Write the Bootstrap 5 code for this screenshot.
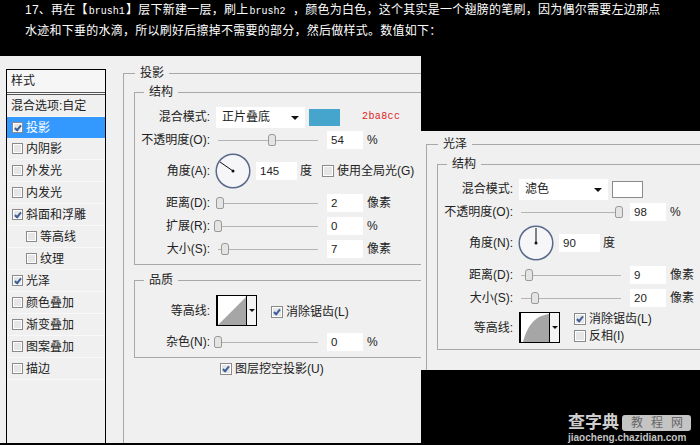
<!DOCTYPE html>
<html lang="zh-CN">
<head>
    <meta charset="UTF-8">
    <title>图层样式</title>
    <link href="https://cdn.jsdelivr.net/npm/bootstrap@5.3.0/dist/css/bootstrap.min.css" rel="stylesheet">
    <style>
        html, body { margin: 0; height: 445px; overflow: hidden; background: #000; }
        body { font-family: "Liberation Sans", "Noto Sans CJK SC", sans-serif; font-size: 12px; color: #222; line-height: 1; position: relative; width: 700px; }
        .intro { color: #fff; padding-left: 25px; font-size: 12px; letter-spacing: .25px; }
        .intro p { margin: 0; height: 21px; line-height: 20px; white-space: nowrap; }
        .intro tt { font-family: "Liberation Mono", monospace; font-size: 10px; letter-spacing: 0; padding: 0 1px; }
        .intro tt.wide { padding-right: 4px; }
        .win { position: absolute; background: #f0f0f0; overflow: hidden; }
        .win-shadow { left: 0; top: 56px; width: 421px; height: 387px; }
        .win-gloss { left: 421px; top: 131px; width: 279px; height: 239px; padding: 13px 0 0 5px; }
        .side { width: 100px; height: 374px; margin: 13px 0 0 6px; border: 1px solid #000; border-bottom: 0; flex: none; }
        .side-head { height: 25px; line-height: 23px; padding-left: 4px; background: #f6f6f6; border-bottom: 3px double #555; font-size: 12px; }
        .side-row { height: 22px; display: flex; align-items: center; padding-left: 5px; gap: 3px; border-bottom: 1px solid #f8f8f8; white-space: nowrap; font-size: 12px; }
        .side-row.first { padding-left: 4px; }
        .side-row.on { background: #3399ff; color: #fff; height: 21px; border-bottom: 0; }
        .side-row.sub { padding-left: 19px; }
        .tick { width: 12px; height: 12px; flex: none; border: 1px solid #8a8a8a; background: #e6e6e6; box-shadow: inset 0 0 0 1px #fff; position: relative; display: inline-block; }
        .side .tick { width: 11px; height: 11px; }
        .tick.yes::after { content: ""; position: absolute; left: 3px; top: 1px; width: 4px; height: 7px; border: solid #3d5f99; border-width: 0 2px 2px 0; transform: rotate(40deg); }
        .pane { flex: 1; padding: 17px 0 0 17px; }
        .frame { border: 1px solid #a8a8a8; border-right: 0; position: relative; }
        .frame-title { position: absolute; left: 11px; top: -7px; background: #f0f0f0; padding: 0 5px; font-size: 12px; }
        .frame .frame .frame-title { left: 9px; }
        .outer-a { height: 400px; padding: 18px 0 0 10px; border-bottom: 0; }
        .inner-a { height: 173px; padding-top: 14px; }
        .inner-b { height: 78px; margin-top: 15px; padding-top: 14px; }
        .line { display: flex; align-items: center; height: 20px; white-space: nowrap; }
        .line + .line { margin-top: 3px; }
        .lab { width: 75px; text-align: right; flex: none; font-size: 12px; }
        .field { width: 36px; height: 18px; line-height: 18px; background: #fff; padding-left: 4px; flex: none; font-size: 11.5px; }
        .field-angle { width: 41px; margin-left: 5px; }
        .unit { margin-left: 4px; font-size: 12px; }
        .unit-angle { margin-left: 3px; }
        .track { width: 100px; height: 1px; background: #b4b4b4; margin: 0 9px 0 8px; position: relative; flex: none; }
        .knob { position: absolute; top: -6px; width: 8px; height: 12px; background: #e4e4e4; border: 1px solid #999; border-radius: 3px 3px 2px 2px; }
        .combo { width: 89px; height: 21px; line-height: 21px; background: #fff; padding-left: 6px; margin-left: 6px; position: relative; flex: none; font-size: 12px; }
        .combo::after { content: ""; position: absolute; right: 6px; top: 9px; border: solid transparent; border-width: 4px 4px 0; border-top-color: #111; }
        .swatch { width: 31px; height: 17px; margin-left: 4px; flex: none; }
        .swatch-blue { background: #45a5cc; }
        .swatch-white { background: #fff; border: 1px solid #8a8a8a; }
        .dial { flex: none; margin-left: 5px; }
        .line-dial { height: 36px; }
        .line-curve { height: 31px; }
        .line + .line-noise { margin-top: 6px; }
        .curve { width: 41px; height: 31px; border: 1px solid #000; border-left-width: 2px; background: #fff; margin-left: 6px; display: flex; flex: none; }
        .curve svg { flex: none; }
        .curve-btn { flex: 1; display: flex; align-items: center; justify-content: center; background: #f4f4f4; border-left: 1px solid #000; }
        .curve-btn::after { content: ""; border: solid transparent; border-width: 3px 3px 0; border-top-color: #111; }
        .red-code { color: #d22; font-family: "Liberation Mono", monospace; font-size: 10px; margin-left: 22px; letter-spacing: .4px; }
        .check { display: flex; align-items: center; gap: 3px; }
        .check-global { margin-left: 10px; }
        .check-knockout { margin: 5px 0 0 86px; }
        .stack { margin-left: 14px; display: flex; flex-direction: column; gap: 5px; }
        .stack-one { padding-top: 3px; }
        .frame-gloss { height: 240px; padding: 19px 0 0 10px; border-bottom: 0; }
        .inner-c { height: 186px; padding-top: 14px; }
        .stamp { position: absolute; left: 568px; top: 414px; width: 122px; }
        .stamp-top { display: flex; align-items: center; gap: 3px; font-weight: 700; font-size: 17px; color: #cfcfcf; white-space: nowrap; }
        .stamp-pill { flex: 1; background: #c4c4c4; color: #666; border-radius: 3px; font-size: 12px; font-weight: 400; letter-spacing: 8px; padding: 2px 0 2px 9px; }
        .stamp-url { font-size: 10px; font-weight: 700; color: #c4c4c4; margin-top: 2px; white-space: nowrap; }
    </style>
</head>
<body>
    <div class="intro">
        <p>17、再在【<tt>brush1</tt>】层下新建一层，刷上<tt class="wide">brush2</tt> ，颜色为白色，这个其实是一个翅膀的笔刷，因为偶尔需要左边那点</p>
        <p>水迹和下垂的水滴，所以刷好后擦掉不需要的部分，然后做样式。数值如下：</p>
    </div>

    <div class="win win-shadow d-flex">
        <div class="side">
            <div class="side-head">样式</div>
            <div class="side-row first">混合选项:自定</div>
            <div class="side-row on"><span class="tick yes"></span>投影</div>
            <div class="side-row"><span class="tick"></span>内阴影</div>
            <div class="side-row"><span class="tick"></span>外发光</div>
            <div class="side-row"><span class="tick"></span>内发光</div>
            <div class="side-row"><span class="tick yes"></span>斜面和浮雕</div>
            <div class="side-row sub"><span class="tick"></span>等高线</div>
            <div class="side-row sub"><span class="tick"></span>纹理</div>
            <div class="side-row"><span class="tick yes"></span>光泽</div>
            <div class="side-row"><span class="tick"></span>颜色叠加</div>
            <div class="side-row"><span class="tick"></span>渐变叠加</div>
            <div class="side-row"><span class="tick"></span>图案叠加</div>
            <div class="side-row"><span class="tick"></span>描边</div>
        </div>
        <div class="pane">
            <div class="frame outer-a">
                <span class="frame-title">投影</span>
                <div class="frame inner-a">
                    <span class="frame-title">结构</span>
                    <div class="line"><span class="lab">混合模式:</span><span class="combo">正片叠底</span><span class="swatch swatch-blue"></span><span class="red-code">2ba8cc</span></div>
                    <div class="line"><span class="lab">不透明度(O):</span><span class="track"><span class="knob" style="left:50px"></span></span><span class="field">54</span><span class="unit">%</span></div>
                    <div class="line line-dial"><span class="lab">角度(A):</span>
                        <svg class="dial" width="36" height="36" viewBox="0 0 36 36"><circle cx="18" cy="18" r="16.8" fill="#f6f6f8" stroke="#5a6a8a" stroke-width="1.5"/><path d="M18 18L5 9" stroke="#111" stroke-width="1"/><circle cx="18" cy="18" r="1.5" fill="#111"/></svg>
                        <span class="field field-angle">145</span><span class="unit unit-angle">度</span><span class="check check-global"><span class="tick"></span>使用全局光(G)</span></div>
                    <div class="line mt-1"><span class="lab">距离(D):</span><span class="track"><span class="knob" style="left:-2px"></span></span><span class="field">2</span><span class="unit">像素</span></div>
                    <div class="line"><span class="lab">扩展(R):</span><span class="track"><span class="knob" style="left:-4px"></span></span><span class="field">0</span><span class="unit">%</span></div>
                    <div class="line"><span class="lab">大小(S):</span><span class="track"><span class="knob" style="left:3px"></span></span><span class="field">7</span><span class="unit">像素</span></div>
                </div>
                <div class="frame inner-b">
                    <span class="frame-title">品质</span>
                    <div class="line line-curve"><span class="lab">等高线:</span>
                        <span class="curve"><svg width="28" height="29" viewBox="0 0 28 29"><path d="M0 29L28 1V29Z" fill="#a6a6a6"/></svg><span class="curve-btn"></span></span>
                        <span class="stack stack-one"><span class="check"><span class="tick yes"></span>消除锯齿(L)</span></span></div>
                    <div class="line line-noise"><span class="lab">杂色(N):</span><span class="track"><span class="knob" style="left:-4px"></span></span><span class="field">0</span><span class="unit">%</span></div>
                </div>
                <div class="check check-knockout"><span class="tick yes"></span>图层挖空投影(U)</div>
            </div>
        </div>
    </div>

    <div class="win win-gloss">
        <div class="frame frame-gloss">
            <span class="frame-title">光泽</span>
            <div class="frame inner-c">
                <span class="frame-title">结构</span>
                <div class="line"><span class="lab">混合模式:</span><span class="combo">滤色</span><span class="swatch swatch-white"></span></div>
                <div class="line"><span class="lab">不透明度(O):</span><span class="track"><span class="knob" style="left:94px"></span></span><span class="field">98</span><span class="unit">%</span></div>
                <div class="line line-dial"><span class="lab">角度(N):</span>
                    <svg class="dial" width="36" height="36" viewBox="0 0 36 36"><circle cx="18" cy="18" r="16.8" fill="#f6f6f8" stroke="#5a6a8a" stroke-width="1.5"/><path d="M18 18V3" stroke="#111" stroke-width="1"/><circle cx="18" cy="18" r="1.5" fill="#111"/></svg>
                    <span class="field field-angle">90</span><span class="unit unit-angle">度</span></div>
                <div class="line mt-1"><span class="lab">距离(D):</span><span class="track"><span class="knob" style="left:4px"></span></span><span class="field">9</span><span class="unit">像素</span></div>
                <div class="line"><span class="lab">大小(S):</span><span class="track"><span class="knob" style="left:10px"></span></span><span class="field">20</span><span class="unit">像素</span></div>
                <div class="line line-curve mt-1"><span class="lab">等高线:</span>
                    <span class="curve"><svg width="28" height="29" viewBox="0 0 28 29"><path d="M2 29C6 14 13 3 28 1V29Z" fill="#a6a6a6"/></svg><span class="curve-btn"></span></span>
                    <span class="stack"><span class="check"><span class="tick yes"></span>消除锯齿(L)</span><span class="check"><span class="tick"></span>反相(I)</span></span></div>
            </div>
        </div>
    </div>

    <div class="stamp">
        <div class="stamp-top">查字典<span class="stamp-pill">教程网</span></div>
        <div class="stamp-url">jiaocheng.chazidian.com</div>
    </div>
</body>
</html>
